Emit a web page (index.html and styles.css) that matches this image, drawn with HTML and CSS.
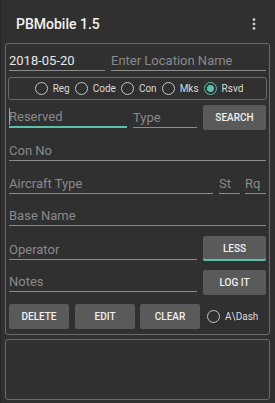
FILE: index.html
```html
<!DOCTYPE html>
<html lang="en">
<head>
    <meta charset="UTF-8">
    <meta name="viewport" content="width=device-width, initial-scale=1.0">
    <title>PBMobile 1.5</title>
    <link rel="stylesheet" href="styles.css">
</head>
<body>

<header class="appbar">
    <h1>PBMobile 1.5</h1>
    <svg class="menu" width="6" height="12" viewBox="0 0 6 12">
        <circle cx="3" cy="1.6" r="1.3" fill="#d8d8d8"/>
        <circle cx="3" cy="6" r="1.3" fill="#d8d8d8"/>
        <circle cx="3" cy="10.4" r="1.3" fill="#d8d8d8"/>
    </svg>
</header>

<form class="panel" id="logForm">
    <div class="row row-top">
        <input type="text" class="field date" value="2018-05-20">
        <input type="text" class="field grow" placeholder="Enter Location Name">
    </div>

    <div class="radio-group">
        <label class="radio-item"><span class="radio"></span>Reg</label>
        <label class="radio-item"><span class="radio"></span>Code</label>
        <label class="radio-item"><span class="radio"></span>Con</label>
        <label class="radio-item"><span class="radio"></span>Mks</label>
        <label class="radio-item"><span class="radio checked"></span>Rsvd</label>
    </div>

    <div class="row row-search">
        <div class="focus-wrap reserved">
            <input type="text" class="field active" placeholder="Reserved">
            <span class="caret"></span>
        </div>
        <input type="text" class="field type" placeholder="Type">
        <button type="button" class="btn">SEARCH</button>
    </div>

    <div class="row row-con">
        <input type="text" class="field grow" placeholder="Con No">
    </div>

    <div class="row row-aircraft">
        <input type="text" class="field grow" placeholder="Aircraft Type">
        <input type="text" class="field small st" placeholder="St">
        <input type="text" class="field small" placeholder="Rq">
    </div>

    <div class="row row-base">
        <input type="text" class="field grow" placeholder="Base Name">
    </div>

    <div class="row row-operator">
        <input type="text" class="field grow" placeholder="Operator">
        <button type="button" class="btn btn-on">LESS</button>
    </div>

    <div class="row row-notes">
        <input type="text" class="field grow" placeholder="Notes">
        <button type="button" class="btn">LOG IT</button>
    </div>

    <div class="row row-actions">
        <button type="button" class="btn action">DELETE</button>
        <button type="button" class="btn action">EDIT</button>
        <button type="button" class="btn action">CLEAR</button>
        <label class="radio-item dash"><span class="radio"></span>A\Dash</label>
    </div>
</form>

<div class="log-panel"></div>

</body>
</html>
```

FILE: styles.css
```css
html, body {
    height: 100%;
}
body {
    margin: 0;
    background-color: #303030;
    font-family: Roboto, "Noto Sans", sans-serif;
    box-shadow: inset 1px 0 0 #262626;
}
.appbar {
    height: 43px;
    box-sizing: border-box;
    padding: 4px 18px 0 16px;
    display: flex;
    align-items: center;
    justify-content: space-between;
}
.appbar h1 {
    margin: 0;
    font-size: 14px;
    font-weight: 500;
    color: #f2f2f2;
}
.panel {
    margin: 0 5px;
    border: 1px solid #6b6b6b;
    border-radius: 3px;
    padding: 3px 3px 5px;
}
.row {
    display: flex;
    align-items: flex-end;
}
.row-top { height: 24px; }
.row-search { height: 30px; }
.row-con { height: 31px; }
.row-aircraft { height: 33px; }
.row-base { height: 32px; }
.row-operator { height: 35px; }
.row-notes { height: 34px; }
.row-actions { height: 34px; }

.field {
    display: block;
    min-width: 0;
    height: 19px;
    line-height: 19px;
    padding: 0;
    margin: 0;
    border: none;
    border-bottom: 1px solid #8c8c8c;
    background: transparent;
    color: #e8e8e8;
    font-family: Roboto, "Noto Sans", sans-serif;
    font-size: 13px;
    outline: none;
}
.field::placeholder {
    color: #8a8a8a;
}
.grow {
    flex: 1;
}
.date {
    width: 96px;
    margin-right: 6px;
}
.focus-wrap {
    position: relative;
}
.reserved {
    width: 118px;
    margin: 0 6px 2px 0;
}
.reserved .field {
    width: 100%;
}
.field.active {
    border-bottom: 2px solid #5bbfaa;
}
.caret {
    position: absolute;
    left: 0;
    top: 1px;
    width: 1px;
    height: 17px;
    background-color: #5bbfaa;
}
.type {
    width: 64px;
    height: 20px;
    margin: 0 6px 2px 0;
}
.small {
    width: 21px;
    margin-left: 5px;
}
.st {
    margin-left: 6px;
}
.row-operator .field {
    margin: 0 6px 1px 0;
}
.row-notes .field {
    margin: 0 6px 3px 0;
}

.radio-group {
    margin: 6px -1px 0;
    height: 21px;
    border: 1px solid #6b6b6b;
    border-radius: 3px;
    display: flex;
    align-items: center;
    justify-content: center;
    gap: 5px;
    padding-left: 3px;
}
.radio-item {
    display: flex;
    align-items: center;
    gap: 5px;
    font-size: 10px;
    color: #dadada;
}
.radio {
    width: 13px;
    height: 13px;
    box-sizing: border-box;
    border: 1.6px solid #c6c6c6;
    border-radius: 50%;
}
.radio.checked {
    border-color: #5bbfaa;
    background: radial-gradient(circle, #5bbfaa 0 3.3px, transparent 3.8px);
}

.btn {
    width: 63px;
    height: 25px;
    padding: 0;
    border: none;
    border-radius: 2px;
    background-color: #5a5a5a;
    color: #f0f0f0;
    font-family: Roboto, "Noto Sans", sans-serif;
    font-size: 10px;
    font-weight: 500;
    cursor: pointer;
}
.btn-on {
    box-shadow: inset 0 -2px 0 #5bbfaa;
}
.action {
    width: 60px;
    margin-right: 6px;
}
.action:nth-child(2) {
    margin-right: 5px;
}
.dash {
    align-self: center;
    margin: 9px 0 0 1px;
}

.log-panel {
    margin: 4px 5px 0;
    height: 61px;
    box-sizing: border-box;
    border: 1px solid #6b6b6b;
    border-radius: 3px;
}
```
